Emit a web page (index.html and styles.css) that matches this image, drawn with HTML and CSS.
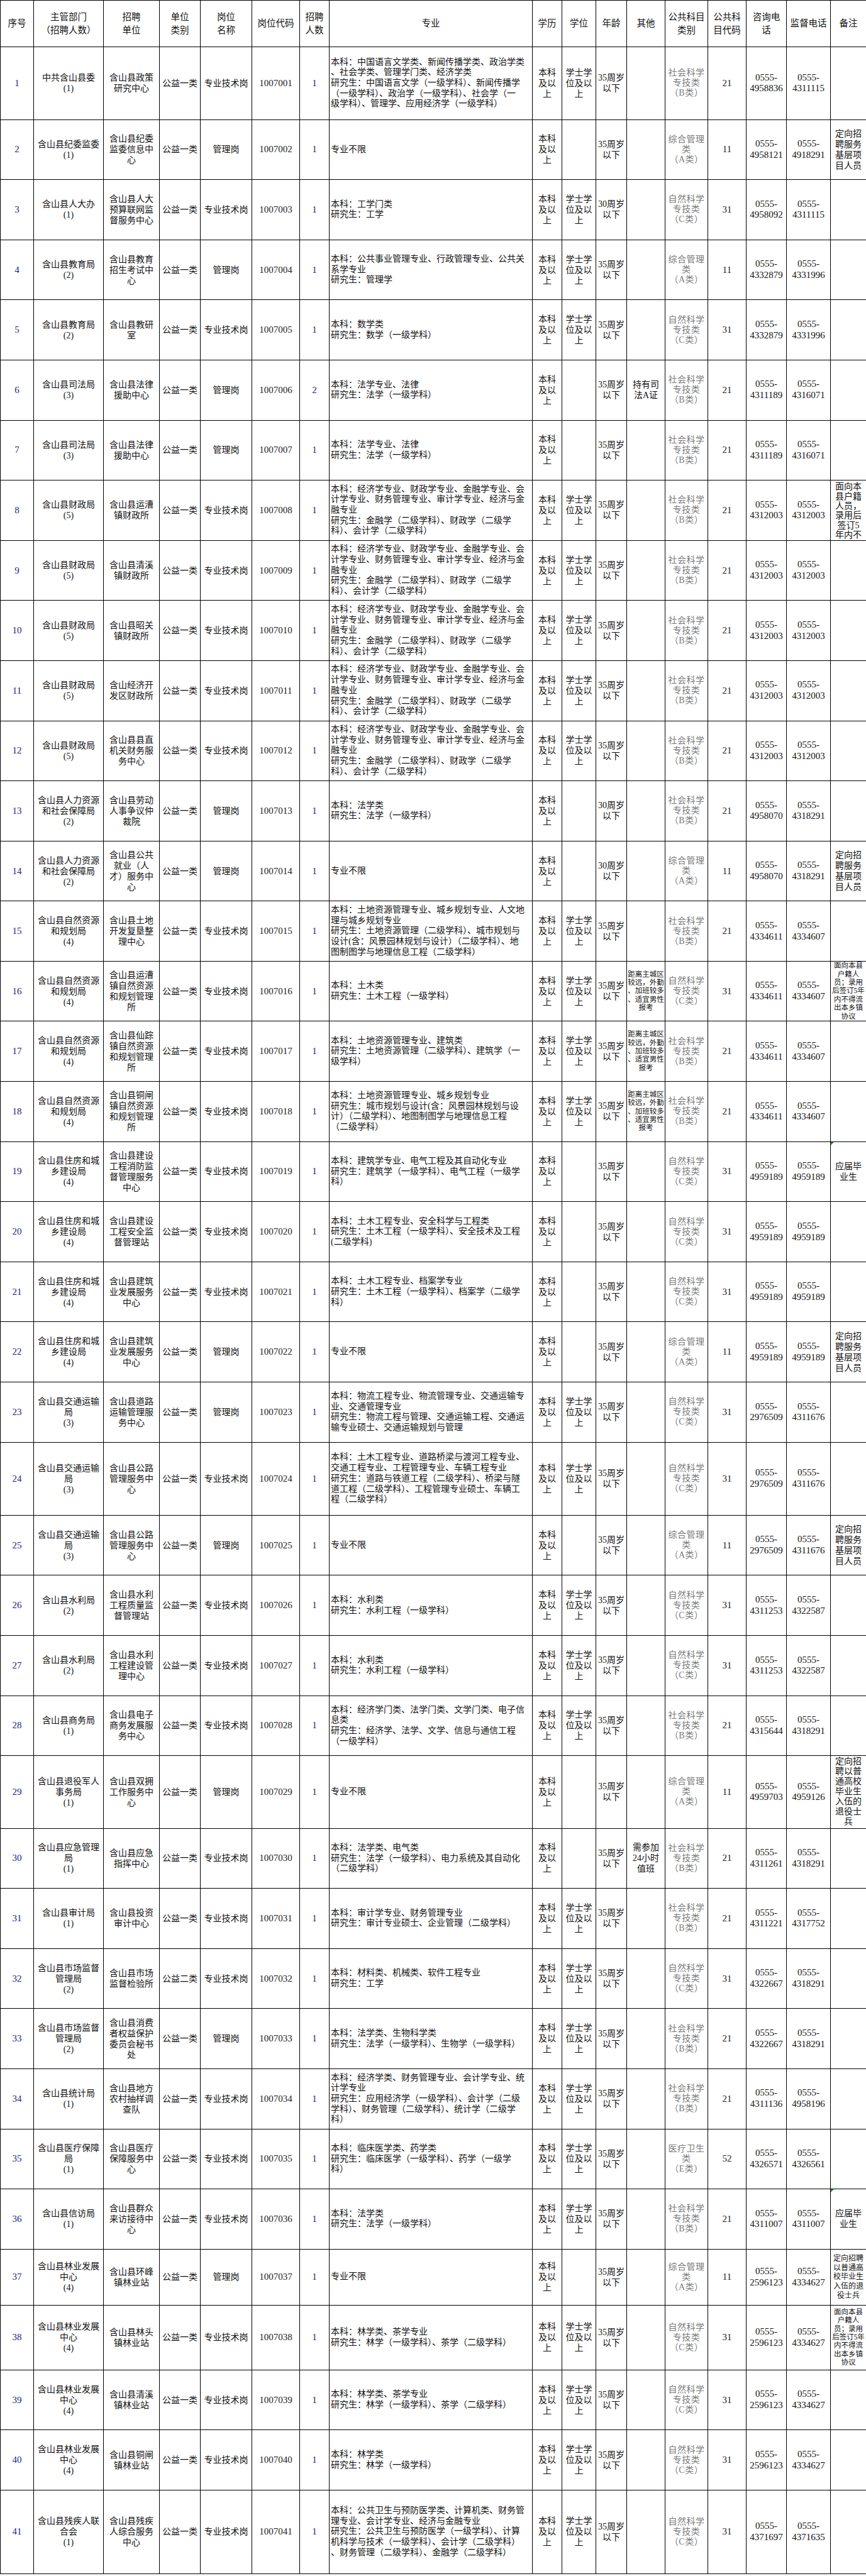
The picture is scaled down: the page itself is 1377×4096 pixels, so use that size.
FILE: index.html
```html
<!DOCTYPE html>
<html lang="zh-CN">
<head>
<meta charset="utf-8">
<title>含山县事业单位招聘岗位表</title>
<link rel="stylesheet" href="styles.css">
</head>
<body>
<table class="sheet">
<colgroup>
<col style="width:53px"><col style="width:111px"><col style="width:89px"><col style="width:65px"><col style="width:82px"><col style="width:76px"><col style="width:47px"><col style="width:323px"><col style="width:47px"><col style="width:54px"><col style="width:49px"><col style="width:61px"><col style="width:68px"><col style="width:61px"><col style="width:64px"><col style="width:70px"><col style="width:57px">
</colgroup>
<thead>
<tr class="h0">
<th>序号</th><th>主管部门<br>（招聘人数）</th><th>招聘<br>单位</th><th>单位<br>类别</th><th>岗位<br>名称</th><th>岗位代码</th><th>招聘<br>人数</th><th>专业</th><th>学历</th><th>学位</th><th>年龄</th><th>其他</th><th>公共科目<br>类别</th><th>公共科<br>目代码</th><th>咨询电<br>话</th><th>监督电话</th><th>备注</th>
</tr>
</thead>
<tbody>
<tr class="h1"><td class="n">1</td><td>中共含山县委<br>(1)</td><td>含山县政策<br>研究中心</td><td>公益一类</td><td>专业技术岗</td><td class="c">1007001</td><td class="n">1</td><td class="m">本科：中国语言文学类、新闻传播学类、政治学类<br>、社会学类、管理学门类、经济学类<br>研究生：中国语言文学（一级学科）、新闻传播学<br>（一级学科）、政治学（一级学科）、社会学（一<br>级学科）、管理学、应用经济学（一级学科）</td><td>本科<br>及以<br>上</td><td>学士学<br>位及以<br>上</td><td>35周岁<br>以下</td><td></td><td class="g">社会科学<br>专技类<br>（B类）</td><td class="c">21</td><td class="p">0555-<br>4958836</td><td class="p">0555-<br>4311115</td><td></td></tr>
<tr class="hs"><td class="n">2</td><td>含山县纪委监委<br>(1)</td><td>含山县纪委<br>监委信息中<br>心</td><td>公益一类</td><td>管理岗</td><td class="c">1007002</td><td class="n">1</td><td class="m">专业不限</td><td>本科<br>及以<br>上</td><td></td><td>35周岁<br>以下</td><td></td><td class="g">综合管理<br>类<br>（A类）</td><td class="c">11</td><td class="p">0555-<br>4958121</td><td class="p">0555-<br>4918291</td><td>定向招<br>聘服务<br>基层项<br>目人员</td></tr>
<tr class="hs"><td class="n">3</td><td>含山县人大办<br>(1)</td><td>含山县人大<br>预算联网监<br>督服务中心</td><td>公益一类</td><td>专业技术岗</td><td class="c">1007003</td><td class="n">1</td><td class="m">本科：工学门类<br>研究生：工学</td><td>本科<br>及以<br>上</td><td>学士学<br>位及以<br>上</td><td>30周岁<br>以下</td><td></td><td class="g">自然科学<br>专技类<br>（C类）</td><td class="c">31</td><td class="p">0555-<br>4958092</td><td class="p">0555-<br>4311115</td><td></td></tr>
<tr class="hs"><td class="n">4</td><td>含山县教育局<br>(2)</td><td>含山县教育<br>招生考试中<br>心</td><td>公益一类</td><td>管理岗</td><td class="c">1007004</td><td class="n">1</td><td class="m">本科：公共事业管理专业、行政管理专业、公共关<br>系学专业<br>研究生：管理学</td><td>本科<br>及以<br>上</td><td>学士学<br>位及以<br>上</td><td>35周岁<br>以下</td><td></td><td class="g">综合管理<br>类<br>（A类）</td><td class="c">11</td><td class="p">0555-<br>4332879</td><td class="p">0555-<br>4331996</td><td></td></tr>
<tr class="hs"><td class="n">5</td><td>含山县教育局<br>(2)</td><td>含山县教研<br>室</td><td>公益一类</td><td>专业技术岗</td><td class="c">1007005</td><td class="n">1</td><td class="m">本科：数学类<br>研究生：数学（一级学科）</td><td>本科<br>及以<br>上</td><td>学士学<br>位及以<br>上</td><td>35周岁<br>以下</td><td></td><td class="g">自然科学<br>专技类<br>（C类）</td><td class="c">31</td><td class="p">0555-<br>4332879</td><td class="p">0555-<br>4331996</td><td></td></tr>
<tr class="hs"><td class="n">6</td><td>含山县司法局<br>(3)</td><td>含山县法律<br>援助中心</td><td>公益一类</td><td>管理岗</td><td class="c">1007006</td><td class="n">2</td><td class="m">本科：法学专业、法律<br>研究生：法学（一级学科）</td><td>本科<br>及以<br>上</td><td></td><td>35周岁<br>以下</td><td>持有司<br>法A证</td><td class="g">社会科学<br>专技类<br>（B类）</td><td class="c">21</td><td class="p">0555-<br>4311189</td><td class="p">0555-<br>4316071</td><td></td></tr>
<tr class="hs"><td class="n">7</td><td>含山县司法局<br>(3)</td><td>含山县法律<br>援助中心</td><td>公益一类</td><td>管理岗</td><td class="c">1007007</td><td class="n">1</td><td class="m">本科：法学专业、法律<br>研究生：法学（一级学科）</td><td>本科<br>及以<br>上</td><td></td><td>35周岁<br>以下</td><td></td><td class="g">社会科学<br>专技类<br>（B类）</td><td class="c">21</td><td class="p">0555-<br>4311189</td><td class="p">0555-<br>4316071</td><td></td></tr>
<tr class="hs"><td class="n">8</td><td>含山县财政局<br>(5)</td><td>含山县运漕<br>镇财政所</td><td>公益一类</td><td>专业技术岗</td><td class="c">1007008</td><td class="n">1</td><td class="m">本科：经济学专业、财政学专业、金融学专业、会<br>计学专业、财务管理专业、审计学专业、经济与金<br>融专业<br>研究生：金融学（二级学科）、财政学（二级学<br>科）、会计学（二级学科）</td><td>本科<br>及以<br>上</td><td>学士学<br>位及以<br>上</td><td>35周岁<br>以下</td><td></td><td class="g">社会科学<br>专技类<br>（B类）</td><td class="c">21</td><td class="p">0555-<br>4312003</td><td class="p">0555-<br>4312003</td><td class="top">面向本<br>县户籍<br>人员，<br>录用后<br>签订5<br>年内不</td></tr>
<tr class="hs"><td class="n">9</td><td>含山县财政局<br>(5)</td><td>含山县清溪<br>镇财政所</td><td>公益一类</td><td>专业技术岗</td><td class="c">1007009</td><td class="n">1</td><td class="m">本科：经济学专业、财政学专业、金融学专业、会<br>计学专业、财务管理专业、审计学专业、经济与金<br>融专业<br>研究生：金融学（二级学科）、财政学（二级学<br>科）、会计学（二级学科）</td><td>本科<br>及以<br>上</td><td>学士学<br>位及以<br>上</td><td>35周岁<br>以下</td><td></td><td class="g">社会科学<br>专技类<br>（B类）</td><td class="c">21</td><td class="p">0555-<br>4312003</td><td class="p">0555-<br>4312003</td><td></td></tr>
<tr class="hs"><td class="n">10</td><td>含山县财政局<br>(5)</td><td>含山县昭关<br>镇财政所</td><td>公益一类</td><td>专业技术岗</td><td class="c">1007010</td><td class="n">1</td><td class="m">本科：经济学专业、财政学专业、金融学专业、会<br>计学专业、财务管理专业、审计学专业、经济与金<br>融专业<br>研究生：金融学（二级学科）、财政学（二级学<br>科）、会计学（二级学科）</td><td>本科<br>及以<br>上</td><td>学士学<br>位及以<br>上</td><td>35周岁<br>以下</td><td></td><td class="g">社会科学<br>专技类<br>（B类）</td><td class="c">21</td><td class="p">0555-<br>4312003</td><td class="p">0555-<br>4312003</td><td></td></tr>
<tr class="hs"><td class="n">11</td><td>含山县财政局<br>(5)</td><td>含山经济开<br>发区财政所</td><td>公益一类</td><td>专业技术岗</td><td class="c">1007011</td><td class="n">1</td><td class="m">本科：经济学专业、财政学专业、金融学专业、会<br>计学专业、财务管理专业、审计学专业、经济与金<br>融专业<br>研究生：金融学（二级学科）、财政学（二级学<br>科）、会计学（二级学科）</td><td>本科<br>及以<br>上</td><td>学士学<br>位及以<br>上</td><td>35周岁<br>以下</td><td></td><td class="g">社会科学<br>专技类<br>（B类）</td><td class="c">21</td><td class="p">0555-<br>4312003</td><td class="p">0555-<br>4312003</td><td></td></tr>
<tr class="hs"><td class="n">12</td><td>含山县财政局<br>(5)</td><td>含山县县直<br>机关财务服<br>务中心</td><td>公益一类</td><td>专业技术岗</td><td class="c">1007012</td><td class="n">1</td><td class="m">本科：经济学专业、财政学专业、金融学专业、会<br>计学专业、财务管理专业、审计学专业、经济与金<br>融专业<br>研究生：金融学（二级学科）、财政学（二级学<br>科）、会计学（二级学科）</td><td>本科<br>及以<br>上</td><td>学士学<br>位及以<br>上</td><td>35周岁<br>以下</td><td></td><td class="g">社会科学<br>专技类<br>（B类）</td><td class="c">21</td><td class="p">0555-<br>4312003</td><td class="p">0555-<br>4312003</td><td></td></tr>
<tr class="hs"><td class="n">13</td><td>含山县人力资源<br>和社会保障局<br>(2)</td><td>含山县劳动<br>人事争议仲<br>裁院</td><td>公益一类</td><td>管理岗</td><td class="c">1007013</td><td class="n">1</td><td class="m">本科：法学类<br>研究生：法学（一级学科）</td><td>本科<br>及以<br>上</td><td></td><td>30周岁<br>以下</td><td></td><td class="g">社会科学<br>专技类<br>（B类）</td><td class="c">21</td><td class="p">0555-<br>4958070</td><td class="p">0555-<br>4318291</td><td></td></tr>
<tr class="hs"><td class="n">14</td><td>含山县人力资源<br>和社会保障局<br>(2)</td><td>含山县公共<br>就业（人<br>才）服务中<br>心</td><td>公益一类</td><td>管理岗</td><td class="c">1007014</td><td class="n">1</td><td class="m">专业不限</td><td>本科<br>及以<br>上</td><td></td><td>30周岁<br>以下</td><td></td><td class="g">综合管理<br>类<br>（A类）</td><td class="c">11</td><td class="p">0555-<br>4958070</td><td class="p">0555-<br>4318291</td><td>定向招<br>聘服务<br>基层项<br>目人员</td></tr>
<tr class="hs"><td class="n">15</td><td>含山县自然资源<br>和规划局<br>(4)</td><td>含山县土地<br>开发复垦整<br>理中心</td><td>公益一类</td><td>专业技术岗</td><td class="c">1007015</td><td class="n">1</td><td class="m">本科：土地资源管理专业、城乡规划专业、人文地<br>理与城乡规划专业<br>研究生：土地资源管理（二级学科）、城市规划与<br>设计(含：风景园林规划与设计）（二级学科）、地<br>图制图学与地理信息工程（二级学科）</td><td>本科<br>及以<br>上</td><td>学士学<br>位及以<br>上</td><td>35周岁<br>以下</td><td></td><td class="g">社会科学<br>专技类<br>（B类）</td><td class="c">21</td><td class="p">0555-<br>4334611</td><td class="p">0555-<br>4334607</td><td></td></tr>
<tr class="hs"><td class="n">16</td><td>含山县自然资源<br>和规划局<br>(4)</td><td>含山县运漕<br>镇自然资源<br>和规划管理<br>所</td><td>公益一类</td><td>专业技术岗</td><td class="c">1007016</td><td class="n">1</td><td class="m">本科：土木类<br>研究生：土木工程（一级学科）</td><td>本科<br>及以<br>上</td><td>学士学<br>位及以<br>上</td><td>35周岁<br>以下</td><td class="s">距离主城区<br>较远，外勤<br>、加班较多<br>、适宜男性<br>报考</td><td class="g">自然科学<br>专技类<br>（C类）</td><td class="c">31</td><td class="p">0555-<br>4334611</td><td class="p">0555-<br>4334607</td><td class="s">面向本县<br>户籍人<br>员；录用<br>后签订5年<br>内不得流<br>出本乡镇<br>协议</td></tr>
<tr class="hs"><td class="n">17</td><td>含山县自然资源<br>和规划局<br>(4)</td><td>含山县仙踪<br>镇自然资源<br>和规划管理<br>所</td><td>公益一类</td><td>专业技术岗</td><td class="c">1007017</td><td class="n">1</td><td class="m">本科：土地资源管理专业、建筑类<br>研究生：土地资源管理（二级学科）、建筑学（一<br>级学科）</td><td>本科<br>及以<br>上</td><td>学士学<br>位及以<br>上</td><td>35周岁<br>以下</td><td class="s">距离主城区<br>较远，外勤<br>、加班较多<br>、适宜男性<br>报考</td><td class="g">社会科学<br>专技类<br>（B类）</td><td class="c">21</td><td class="p">0555-<br>4334611</td><td class="p">0555-<br>4334607</td><td></td></tr>
<tr class="hs"><td class="n">18</td><td>含山县自然资源<br>和规划局<br>(4)</td><td>含山县铜闸<br>镇自然资源<br>和规划管理<br>所</td><td>公益一类</td><td>专业技术岗</td><td class="c">1007018</td><td class="n">1</td><td class="m">本科：土地资源管理专业、城乡规划专业<br>研究生：城市规划与设计(含：风景园林规划与设<br>计）（二级学科）、地图制图学与地理信息工程<br>（二级学科）</td><td>本科<br>及以<br>上</td><td>学士学<br>位及以<br>上</td><td>35周岁<br>以下</td><td class="s">距离主城区<br>较远，外勤<br>、加班较多<br>、适宜男性<br>报考</td><td class="g">社会科学<br>专技类<br>（B类）</td><td class="c">21</td><td class="p">0555-<br>4334611</td><td class="p">0555-<br>4334607</td><td></td></tr>
<tr class="hs"><td class="n">19</td><td>含山县住房和城<br>乡建设局<br>(4)</td><td>含山县建设<br>工程消防监<br>督管理服务<br>中心</td><td>公益一类</td><td>专业技术岗</td><td class="c">1007019</td><td class="n">1</td><td class="m">本科：建筑学专业、电气工程及其自动化专业<br>研究生：建筑学（一级学科）、电气工程（一级学<br>科）</td><td>本科<br>及以<br>上</td><td></td><td>35周岁<br>以下</td><td></td><td class="g">自然科学<br>专技类<br>（C类）</td><td class="c">31</td><td class="p">0555-<br>4959189</td><td class="p">0555-<br>4959189</td><td class="tri">应届毕<br>业生</td></tr>
<tr class="hs"><td class="n">20</td><td>含山县住房和城<br>乡建设局<br>(4)</td><td>含山县建设<br>工程安全监<br>督管理站</td><td>公益一类</td><td>专业技术岗</td><td class="c">1007020</td><td class="n">1</td><td class="m">本科：土木工程专业、安全科学与工程类<br>研究生：土木工程（一级学科）、安全技术及工程<br>(二级学科)</td><td>本科<br>及以<br>上</td><td></td><td>35周岁<br>以下</td><td></td><td class="g">自然科学<br>专技类<br>（C类）</td><td class="c">31</td><td class="p">0555-<br>4959189</td><td class="p">0555-<br>4959189</td><td></td></tr>
<tr class="hs"><td class="n">21</td><td>含山县住房和城<br>乡建设局<br>(4)</td><td>含山县建筑<br>业发展服务<br>中心</td><td>公益一类</td><td>专业技术岗</td><td class="c">1007021</td><td class="n">1</td><td class="m">本科：土木工程专业、档案学专业<br>研究生：土木工程（一级学科）、档案学（二级学<br>科）</td><td>本科<br>及以<br>上</td><td></td><td>35周岁<br>以下</td><td></td><td class="g">自然科学<br>专技类<br>（C类）</td><td class="c">31</td><td class="p">0555-<br>4959189</td><td class="p">0555-<br>4959189</td><td></td></tr>
<tr class="hs"><td class="n">22</td><td>含山县住房和城<br>乡建设局<br>(4)</td><td>含山县建筑<br>业发展服务<br>中心</td><td>公益一类</td><td>管理岗</td><td class="c">1007022</td><td class="n">1</td><td class="m">专业不限</td><td>本科<br>及以<br>上</td><td></td><td>35周岁<br>以下</td><td></td><td class="g">综合管理<br>类<br>（A类）</td><td class="c">11</td><td class="p">0555-<br>4959189</td><td class="p">0555-<br>4959189</td><td>定向招<br>聘服务<br>基层项<br>目人员</td></tr>
<tr class="hs"><td class="n">23</td><td>含山县交通运输<br>局<br>(3)</td><td>含山县道路<br>运输管理服<br>务中心</td><td>公益一类</td><td>管理岗</td><td class="c">1007023</td><td class="n">1</td><td class="m">本科：物流工程专业、物流管理专业、交通运输专<br>业、交通管理专业<br>研究生：物流工程与管理、交通运输工程、交通运<br>输专业硕士、交通运输规划与管理</td><td>本科<br>及以<br>上</td><td>学士学<br>位及以<br>上</td><td>35周岁<br>以下</td><td></td><td class="g">自然科学<br>专技类<br>（C类）</td><td class="c">31</td><td class="p">0555-<br>2976509</td><td class="p">0555-<br>4311676</td><td></td></tr>
<tr class="h24"><td class="n">24</td><td>含山县交通运输<br>局<br>(3)</td><td>含山县公路<br>管理服务中<br>心</td><td>公益一类</td><td>专业技术岗</td><td class="c">1007024</td><td class="n">1</td><td class="m">本科：土木工程专业、道路桥梁与渡河工程专业、<br>交通工程专业、工程管理专业、车辆工程专业<br>研究生：道路与铁道工程（二级学科）、桥梁与隧<br>道工程（二级学科）、工程管理专业硕士、车辆工<br>程（二级学科）</td><td>本科<br>及以<br>上</td><td>学士学<br>位及以<br>上</td><td>35周岁<br>以下</td><td></td><td class="g">自然科学<br>专技类<br>（C类）</td><td class="c">31</td><td class="p">0555-<br>2976509</td><td class="p">0555-<br>4311676</td><td></td></tr>
<tr class="hs"><td class="n">25</td><td>含山县交通运输<br>局<br>(3)</td><td>含山县公路<br>管理服务中<br>心</td><td>公益一类</td><td>管理岗</td><td class="c">1007025</td><td class="n">1</td><td class="m">专业不限</td><td>本科<br>及以<br>上</td><td></td><td>35周岁<br>以下</td><td></td><td class="g">综合管理<br>类<br>（A类）</td><td class="c">11</td><td class="p">0555-<br>2976509</td><td class="p">0555-<br>4311676</td><td>定向招<br>聘服务<br>基层项<br>目人员</td></tr>
<tr class="hs"><td class="n">26</td><td>含山县水利局<br>(2)</td><td>含山县水利<br>工程质量监<br>督管理站</td><td>公益一类</td><td>专业技术岗</td><td class="c">1007026</td><td class="n">1</td><td class="m">本科：水利类<br>研究生：水利工程（一级学科）</td><td>本科<br>及以<br>上</td><td>学士学<br>位及以<br>上</td><td>35周岁<br>以下</td><td></td><td class="g">自然科学<br>专技类<br>（C类）</td><td class="c">31</td><td class="p">0555-<br>4311253</td><td class="p">0555-<br>4322587</td><td></td></tr>
<tr class="hs"><td class="n">27</td><td>含山县水利局<br>(2)</td><td>含山县水利<br>工程建设管<br>理中心</td><td>公益一类</td><td>专业技术岗</td><td class="c">1007027</td><td class="n">1</td><td class="m">本科：水利类<br>研究生：水利工程（一级学科）</td><td>本科<br>及以<br>上</td><td>学士学<br>位及以<br>上</td><td>35周岁<br>以下</td><td></td><td class="g">自然科学<br>专技类<br>（C类）</td><td class="c">31</td><td class="p">0555-<br>4311253</td><td class="p">0555-<br>4322587</td><td></td></tr>
<tr class="hs"><td class="n">28</td><td>含山县商务局<br>(1)</td><td>含山县电子<br>商务发展服<br>务中心</td><td>公益一类</td><td>专业技术岗</td><td class="c">1007028</td><td class="n">1</td><td class="m">本科：经济学门类、法学门类、文学门类、电子信<br>息类<br>研究生：经济学、法学、文学、信息与通信工程<br>（一级学科）</td><td>本科<br>及以<br>上</td><td>学士学<br>位及以<br>上</td><td>35周岁<br>以下</td><td></td><td class="g">社会科学<br>专技类<br>（B类）</td><td class="c">21</td><td class="p">0555-<br>4315644</td><td class="p">0555-<br>4318291</td><td></td></tr>
<tr class="h1"><td class="n">29</td><td>含山县退役军人<br>事务局<br>(1)</td><td>含山县双拥<br>工作服务中<br>心</td><td>公益一类</td><td>管理岗</td><td class="c">1007029</td><td class="n">1</td><td class="m">专业不限</td><td>本科<br>及以<br>上</td><td></td><td>35周岁<br>以下</td><td></td><td class="g">综合管理<br>类<br>（A类）</td><td class="c">11</td><td class="p">0555-<br>4959703</td><td class="p">0555-<br>4959126</td><td class="tight">定向招<br>聘以普<br>通高校<br>毕业生<br>入伍的<br>退役士<br>兵</td></tr>
<tr class="hs"><td class="n">30</td><td>含山县应急管理<br>局<br>(1)</td><td>含山县应急<br>指挥中心</td><td>公益一类</td><td>专业技术岗</td><td class="c">1007030</td><td class="n">1</td><td class="m">本科：法学类、电气类<br>研究生：法学（一级学科）、电力系统及其自动化<br>（二级学科）</td><td>本科<br>及以<br>上</td><td></td><td>35周岁<br>以下</td><td>需参加<br>24小时<br>值班</td><td class="g">社会科学<br>专技类<br>（B类）</td><td class="c">21</td><td class="p">0555-<br>4311261</td><td class="p">0555-<br>4318291</td><td></td></tr>
<tr class="hs"><td class="n">31</td><td>含山县审计局<br>(1)</td><td>含山县投资<br>审计中心</td><td>公益一类</td><td>专业技术岗</td><td class="c">1007031</td><td class="n">1</td><td class="m">本科：审计学专业、财务管理专业<br>研究生：审计专业硕士、企业管理（二级学科）</td><td>本科<br>及以<br>上</td><td>学士学<br>位及以<br>上</td><td>35周岁<br>以下</td><td></td><td class="g">社会科学<br>专技类<br>（B类）</td><td class="c">21</td><td class="p">0555-<br>4311221</td><td class="p">0555-<br>4317752</td><td></td></tr>
<tr class="hs"><td class="n">32</td><td>含山县市场监督<br>管理局<br>(2)</td><td>含山县市场<br>监督检验所</td><td>公益二类</td><td>专业技术岗</td><td class="c">1007032</td><td class="n">1</td><td class="m">本科：材料类、机械类、软件工程专业<br>研究生：工学</td><td>本科<br>及以<br>上</td><td>学士学<br>位及以<br>上</td><td>35周岁<br>以下</td><td></td><td class="g">自然科学<br>专技类<br>（C类）</td><td class="c">31</td><td class="p">0555-<br>4322667</td><td class="p">0555-<br>4318291</td><td></td></tr>
<tr class="hs"><td class="n">33</td><td>含山县市场监督<br>管理局<br>(2)</td><td>含山县消费<br>者权益保护<br>委员会秘书<br>处</td><td>公益一类</td><td>管理岗</td><td class="c">1007033</td><td class="n">1</td><td class="m">本科：法学类、生物科学类<br>研究生：法学（一级学科）、生物学（一级学科）</td><td>本科<br>及以<br>上</td><td>学士学<br>位及以<br>上</td><td>35周岁<br>以下</td><td></td><td class="g">社会科学<br>专技类<br>（B类）</td><td class="c">21</td><td class="p">0555-<br>4322667</td><td class="p">0555-<br>4318291</td><td></td></tr>
<tr class="hs"><td class="n">34</td><td>含山县统计局<br>(1)</td><td>含山县地方<br>农村抽样调<br>查队</td><td>公益一类</td><td>专业技术岗</td><td class="c">1007034</td><td class="n">1</td><td class="m">本科：经济学类、财务管理专业、会计学专业、统<br>计学专业<br>研究生：应用经济学（一级学科）、会计学（二级<br>学科）、财务管理（二级学科）、统计学（二级学<br>科）</td><td>本科<br>及以<br>上</td><td>学士学<br>位及以<br>上</td><td>35周岁<br>以下</td><td></td><td class="g">社会科学<br>专技类<br>（B类）</td><td class="c">21</td><td class="p">0555-<br>4311136</td><td class="p">0555-<br>4958196</td><td></td></tr>
<tr class="hs"><td class="n">35</td><td>含山县医疗保障<br>局<br>(1)</td><td>含山县医疗<br>保障服务中<br>心</td><td>公益一类</td><td>专业技术岗</td><td class="c">1007035</td><td class="n">1</td><td class="m">本科：临床医学类、药学类<br>研究生：临床医学（一级学科）、药学（一级学<br>科）</td><td>本科<br>及以<br>上</td><td>学士学<br>位及以<br>上</td><td>35周岁<br>以下</td><td></td><td class="g">医疗卫生<br>类<br>（E类）</td><td class="c">52</td><td class="p">0555-<br>4326571</td><td class="p">0555-<br>4326561</td><td></td></tr>
<tr class="hs"><td class="n">36</td><td>含山县信访局<br>(1)</td><td>含山县群众<br>来访接待中<br>心</td><td>公益一类</td><td>专业技术岗</td><td class="c">1007036</td><td class="n">1</td><td class="m">本科：法学类<br>研究生：法学（一级学科）</td><td>本科<br>及以<br>上</td><td>学士学<br>位及以<br>上</td><td>35周岁<br>以下</td><td></td><td class="g">社会科学<br>专技类<br>（B类）</td><td class="c">21</td><td class="p">0555-<br>4311007</td><td class="p">0555-<br>4311007</td><td class="tri">应届毕<br>业生</td></tr>
<tr class="h37"><td class="n">37</td><td>含山县林业发展<br>中心<br>(4)</td><td>含山县环峰<br>镇林业站</td><td>公益一类</td><td>管理岗</td><td class="c">1007037</td><td class="n">1</td><td class="m">专业不限</td><td>本科<br>及以<br>上</td><td></td><td>35周岁<br>以下</td><td></td><td class="g">综合管理<br>类<br>（A类）</td><td class="c">11</td><td class="p">0555-<br>2596123</td><td class="p">0555-<br>4334627</td><td class="s2">定向招聘<br>以普通高<br>校毕业生<br>入伍的退<br>役士兵</td></tr>
<tr class="h38"><td class="n">38</td><td>含山县林业发展<br>中心<br>(4)</td><td>含山县林头<br>镇林业站</td><td>公益一类</td><td>专业技术岗</td><td class="c">1007038</td><td class="n">1</td><td class="m">本科：林学类、茶学专业<br>研究生：林学（一级学科）、茶学（二级学科）</td><td>本科<br>及以<br>上</td><td>学士学<br>位及以<br>上</td><td>35周岁<br>以下</td><td></td><td class="g">自然科学<br>专技类<br>（C类）</td><td class="c">31</td><td class="p">0555-<br>2596123</td><td class="p">0555-<br>4334627</td><td class="s">面向本县<br>户籍人<br>员；录用<br>后签订5年<br>内不得流<br>出本乡镇<br>协议</td></tr>
<tr class="hs"><td class="n">39</td><td>含山县林业发展<br>中心<br>(4)</td><td>含山县清溪<br>镇林业站</td><td>公益一类</td><td>专业技术岗</td><td class="c">1007039</td><td class="n">1</td><td class="m">本科：林学类、茶学专业<br>研究生：林学（一级学科）、茶学（二级学科）</td><td>本科<br>及以<br>上</td><td>学士学<br>位及以<br>上</td><td>35周岁<br>以下</td><td></td><td class="g">自然科学<br>专技类<br>（C类）</td><td class="c">31</td><td class="p">0555-<br>2596123</td><td class="p">0555-<br>4334627</td><td></td></tr>
<tr class="hs"><td class="n">40</td><td>含山县林业发展<br>中心<br>(4)</td><td>含山县铜闸<br>镇林业站</td><td>公益一类</td><td>专业技术岗</td><td class="c">1007040</td><td class="n">1</td><td class="m">本科：林学类<br>研究生：林学（一级学科）</td><td>本科<br>及以<br>上</td><td>学士学<br>位及以<br>上</td><td>35周岁<br>以下</td><td></td><td class="g">自然科学<br>专技类<br>（C类）</td><td class="c">31</td><td class="p">0555-<br>2596123</td><td class="p">0555-<br>4334627</td><td></td></tr>
<tr class="h41"><td class="n">41</td><td>含山县残疾人联<br>合会<br>(1)</td><td>含山县残疾<br>人综合服务<br>中心</td><td>公益一类</td><td>专业技术岗</td><td class="c">1007041</td><td class="n">1</td><td class="m">本科：公共卫生与预防医学类、计算机类、财务管<br>理专业、会计学专业、经济与金融专业<br>研究生：公共卫生与预防医学（一级学科）、计算<br>机科学与技术（一级学科）、会计学（二级学科）<br>、财务管理（二级学科）、金融学（二级学科）</td><td>本科<br>及以<br>上</td><td>学士学<br>位及以<br>上</td><td>35周岁<br>以下</td><td></td><td class="g">自然科学<br>专技类<br>（C类）</td><td class="c">31</td><td class="p">0555-<br>4371697</td><td class="p">0555-<br>4371635</td><td></td></tr>
</tbody>
</table>
</body>
</html>
```

FILE: styles.css
```css
html, body {
  margin: 0;
  padding: 0;
  background: #ffffff;
}

.sheet {
  width: 1377px;
  table-layout: fixed;
  border-collapse: collapse;
  font-family: "Liberation Serif", "Noto Sans CJK SC", serif;
  font-size: 14px;
  line-height: 17px;
  color: #111111;
}

.sheet th,
.sheet td {
  border: 1px solid #000000;
  padding: 0;
  text-align: center;
  vertical-align: middle;
  overflow: hidden;
  white-space: nowrap;
  font-weight: normal;
}

.sheet th {
  line-height: 20.6px;
  font-size: 14.5px;
}

.h0 { height: 74.2px; }
.h1 { height: 115.4px; }
.hs { height: 95.6px; }
.h24 { height: 116.2px; }
.h37 { height: 89px; }
.h38 { height: 103px; }
.h41 { height: 132.7px; }

.sheet td.n {
  color: #1c1c8a;
  font-size: 15px;
}

.sheet td.c {
  font-size: 15px;
  color: #222222;
}

.sheet td.p {
  font-size: 15px;
  line-height: 17.8px;
}

.sheet td.m {
  text-align: left;
  padding-left: 2px;
  line-height: 16.7px;
}

.sheet td.g {
  color: #7a7a7a;
  line-height: 16px;
  letter-spacing: 0.5px;
}

.sheet td.s {
  font-size: 11.5px;
  line-height: 13.4px;
}

.sheet td.s2 {
  font-size: 12px;
  line-height: 14.8px;
}

.sheet td.tight {
  line-height: 16px;
}

.sheet td.top {
  vertical-align: top;
  padding-top: 2px;
  line-height: 15.4px;
}

.sheet td.tri {
  position: relative;
}

.sheet td.tri::before {
  content: "";
  position: absolute;
  left: 0;
  top: 0;
  border-top: 5px solid #1f9d1f;
  border-right: 5px solid transparent;
}
```
